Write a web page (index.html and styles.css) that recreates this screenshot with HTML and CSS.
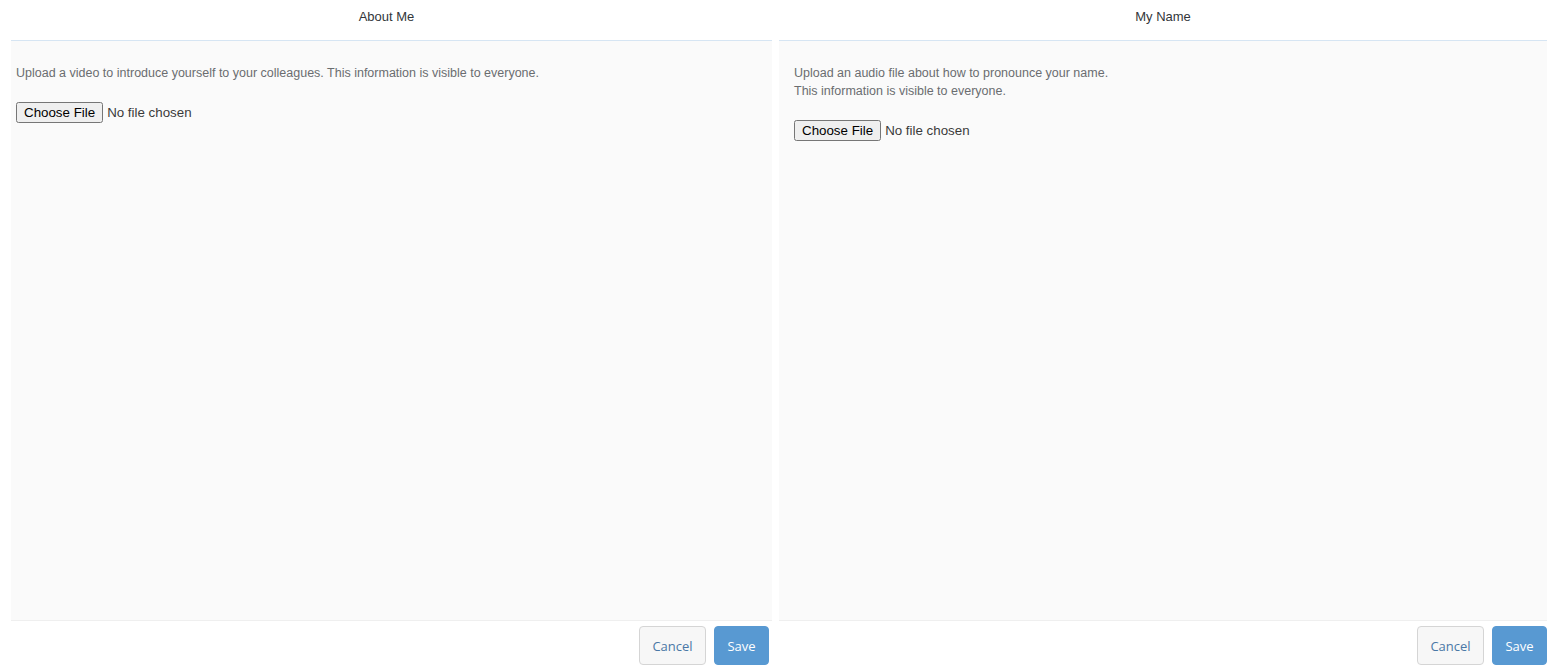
FILE: index.html
```html
<!DOCTYPE html>
<html>
<head>
<meta charset="utf-8">
<link rel="stylesheet" href="styles.css">
</head>
<body>
<div class="page">
  <section class="panel panel-left">
    <header class="panel-head">About Me</header>
    <div class="panel-body">
      <p class="desc">Upload a video to introduce yourself to your colleagues. This information is visible to everyone.</p>
      <input type="file" class="file">
    </div>
    <footer class="panel-foot">
      <button class="btn btn-cancel">Cancel</button>
      <button class="btn btn-save">Save</button>
    </footer>
  </section>
  <section class="panel panel-right">
    <header class="panel-head">My Name</header>
    <div class="panel-body">
      <p class="desc">Upload an audio file about how to pronounce your name.<br>This information is visible to everyone.</p>
      <input type="file" class="file">
    </div>
    <footer class="panel-foot">
      <button class="btn btn-cancel">Cancel</button>
      <button class="btn btn-save">Save</button>
    </footer>
  </section>
</div>
</body>
</html>
```
FILE: styles.css
```css
html, body {
  margin: 0;
  padding: 0;
  background: #ffffff;
}
.page {
  display: flex;
  gap: 7px;
  padding-left: 11px;
  height: 672px;
  font-family: "Liberation Sans", Arial, sans-serif;
}
.panel {
  display: flex;
  flex-direction: column;
}
.panel-left { width: 761px; }
.panel-right { width: 768px; }
.panel-head {
  height: 41px;
  border-bottom: 1px solid #d6e5f3;
  display: flex;
  align-items: center;
  justify-content: center;
  font-size: 13px;
  color: #32363a;
  padding-bottom: 7px;
  box-sizing: border-box;
}
.panel-left .panel-head { padding-right: 10px; }
.panel-body {
  height: 580px;
  background: #fafafa;
  border-bottom: 1px solid #efefef;
  box-sizing: border-box;
  padding-top: 23px;
}
.panel-left .panel-body { padding-left: 5px; }
.panel-right .panel-body { padding-left: 15px; }
.desc {
  margin: 0 0 20px 0;
  font-size: 12.5px;
  line-height: 18px;
  color: #6a6d70;
}
.file {
  display: block;
  font-size: 13.33px;
  color: #3a3a3a;
}
.panel-foot {
  display: flex;
  justify-content: flex-end;
  gap: 8px;
  padding-top: 5px;
}
.panel-left .panel-foot { padding-right: 3px; }
.btn {
  height: 39px;
  border-radius: 4px;
  font-family: "Open Sans", "Liberation Sans", sans-serif;
  font-size: 13px;
  padding: 0;
  cursor: pointer;
}
.btn-cancel {
  width: 67px;
  background: #f7f7f7;
  border: 1px solid #d5d5d5;
  color: #4a78a6;
}
.btn-save {
  width: 55px;
  background: #5899d2;
  border: 1px solid #5899d2;
  color: #ffffff;
}
```
